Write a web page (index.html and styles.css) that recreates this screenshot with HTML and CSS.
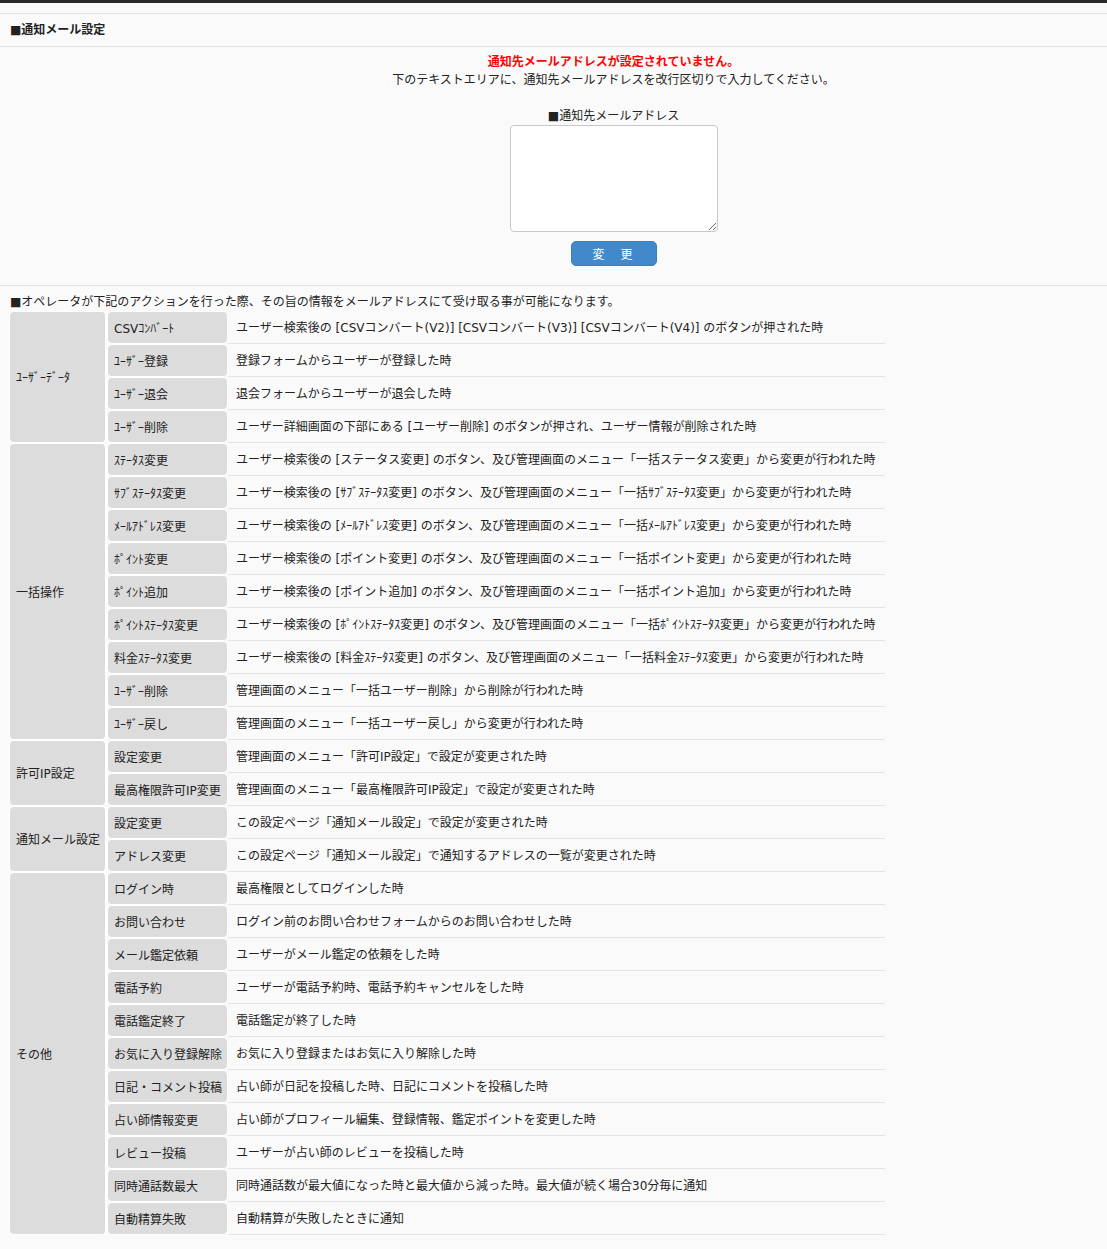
FILE: index.html
```html
<!DOCTYPE html>
<html lang="ja">
<head>
<meta charset="utf-8">
<title>通知メール設定</title>
<link rel="stylesheet" href="styles.css">
</head>
<body>
<div class="topbar"></div>
<section class="panel">
  <h2 class="panel-title">■通知メール設定</h2>
  <div class="form-area">
    <p class="warn">通知先メールアドレスが設定されていません。</p>
    <p class="note">下のテキストエリアに、通知先メールアドレスを改行区切りで入力してください。</p>
    <p class="label">■通知先メールアドレス</p>
    <textarea class="addr"></textarea>
    <div class="btn-row"><button class="btn" type="button">変　更</button></div>
  </div>
  <div class="list-area">
    <p class="intro">■オペレータが下記のアクションを行った際、その旨の情報をメールアドレスにて受け取る事が可能になります。</p>
    <table class="actions">
      <colgroup><col class="c1"><col class="c2"><col class="c3"></colgroup>
      <tbody>
        <tr><td class="cat" rowspan="4">ﾕｰｻﾞｰﾃﾞｰﾀ</td><td class="sub">CSVｺﾝﾊﾞｰﾄ</td><td class="desc">ユーザー検索後の [CSVコンバート(V2)] [CSVコンバート(V3)] [CSVコンバート(V4)] のボタンが押された時</td></tr>
        <tr><td class="sub">ﾕｰｻﾞｰ登録</td><td class="desc">登録フォームからユーザーが登録した時</td></tr>
        <tr><td class="sub">ﾕｰｻﾞｰ退会</td><td class="desc">退会フォームからユーザーが退会した時</td></tr>
        <tr><td class="sub">ﾕｰｻﾞｰ削除</td><td class="desc">ユーザー詳細画面の下部にある [ユーザー削除] のボタンが押され、ユーザー情報が削除された時</td></tr>

        <tr><td class="cat" rowspan="9">一括操作</td><td class="sub">ｽﾃｰﾀｽ変更</td><td class="desc">ユーザー検索後の [ステータス変更] のボタン、及び管理画面のメニュー「一括ステータス変更」から変更が行われた時</td></tr>
        <tr><td class="sub">ｻﾌﾞｽﾃｰﾀｽ変更</td><td class="desc">ユーザー検索後の [ｻﾌﾞｽﾃｰﾀｽ変更] のボタン、及び管理画面のメニュー「一括ｻﾌﾞｽﾃｰﾀｽ変更」から変更が行われた時</td></tr>
        <tr><td class="sub">ﾒｰﾙｱﾄﾞﾚｽ変更</td><td class="desc">ユーザー検索後の [ﾒｰﾙｱﾄﾞﾚｽ変更] のボタン、及び管理画面のメニュー「一括ﾒｰﾙｱﾄﾞﾚｽ変更」から変更が行われた時</td></tr>
        <tr><td class="sub">ﾎﾟｲﾝﾄ変更</td><td class="desc">ユーザー検索後の [ポイント変更] のボタン、及び管理画面のメニュー「一括ポイント変更」から変更が行われた時</td></tr>
        <tr><td class="sub">ﾎﾟｲﾝﾄ追加</td><td class="desc">ユーザー検索後の [ポイント追加] のボタン、及び管理画面のメニュー「一括ポイント追加」から変更が行われた時</td></tr>
        <tr><td class="sub">ﾎﾟｲﾝﾄｽﾃｰﾀｽ変更</td><td class="desc">ユーザー検索後の [ﾎﾟｲﾝﾄｽﾃｰﾀｽ変更] のボタン、及び管理画面のメニュー「一括ﾎﾟｲﾝﾄｽﾃｰﾀｽ変更」から変更が行われた時</td></tr>
        <tr><td class="sub">料金ｽﾃｰﾀｽ変更</td><td class="desc">ユーザー検索後の [料金ｽﾃｰﾀｽ変更] のボタン、及び管理画面のメニュー「一括料金ｽﾃｰﾀｽ変更」から変更が行われた時</td></tr>
        <tr><td class="sub">ﾕｰｻﾞｰ削除</td><td class="desc">管理画面のメニュー「一括ユーザー削除」から削除が行われた時</td></tr>
        <tr><td class="sub">ﾕｰｻﾞｰ戻し</td><td class="desc">管理画面のメニュー「一括ユーザー戻し」から変更が行われた時</td></tr>

        <tr><td class="cat" rowspan="2">許可IP設定</td><td class="sub">設定変更</td><td class="desc">管理画面のメニュー「許可IP設定」で設定が変更された時</td></tr>
        <tr><td class="sub">最高権限許可IP変更</td><td class="desc">管理画面のメニュー「最高権限許可IP設定」で設定が変更された時</td></tr>

        <tr><td class="cat" rowspan="2">通知メール設定</td><td class="sub">設定変更</td><td class="desc">この設定ページ「通知メール設定」で設定が変更された時</td></tr>
        <tr><td class="sub">アドレス変更</td><td class="desc">この設定ページ「通知メール設定」で通知するアドレスの一覧が変更された時</td></tr>

        <tr><td class="cat" rowspan="11">その他</td><td class="sub">ログイン時</td><td class="desc">最高権限としてログインした時</td></tr>
        <tr><td class="sub">お問い合わせ</td><td class="desc">ログイン前のお問い合わせフォームからのお問い合わせした時</td></tr>
        <tr><td class="sub">メール鑑定依頼</td><td class="desc">ユーザーがメール鑑定の依頼をした時</td></tr>
        <tr><td class="sub">電話予約</td><td class="desc">ユーザーが電話予約時、電話予約キャンセルをした時</td></tr>
        <tr><td class="sub">電話鑑定終了</td><td class="desc">電話鑑定が終了した時</td></tr>
        <tr><td class="sub">お気に入り登録解除</td><td class="desc">お気に入り登録またはお気に入り解除した時</td></tr>
        <tr><td class="sub">日記・コメント投稿</td><td class="desc">占い師が日記を投稿した時、日記にコメントを投稿した時</td></tr>
        <tr><td class="sub">占い師情報変更</td><td class="desc">占い師がプロフィール編集、登録情報、鑑定ポイントを変更した時</td></tr>
        <tr><td class="sub">レビュー投稿</td><td class="desc">ユーザーが占い師のレビューを投稿した時</td></tr>
        <tr><td class="sub">同時通話数最大</td><td class="desc">同時通話数が最大値になった時と最大値から減った時。最大値が続く場合30分毎に通知</td></tr>
        <tr><td class="sub">自動精算失敗</td><td class="desc">自動精算が失敗したときに通知</td></tr>
      </tbody>
    </table>
  </div>
</section>
</body>
</html>
```

FILE: styles.css
```css
html, body {
  margin: 0;
  padding: 0;
  background: #fafafa;
}
body {
  font-family: "DejaVu Sans", "Noto Sans CJK JP", sans-serif;
  font-size: 12px;
  line-height: 18px;
  color: #222;
}
p { margin: 0; }

.topbar {
  height: 3px;
  background: #2a2a2a;
}

.panel {
  margin-top: 10px;
  border-top: 1px solid #e2e2e2;
}

.panel-title {
  margin: 0;
  padding: 1px 10px 0;
  height: 31px;
  line-height: 30px;
  font-size: 12px;
  font-weight: bold;
  border-bottom: 1px solid #e2e2e2;
}

.form-area {
  padding: 6px 0 19px 120px;
  text-align: center;
  border-bottom: 1px solid #e2e2e2;
}
.warn {
  color: #ff0000;
  font-weight: bold;
}
.label {
  margin-top: 18px;
}
.addr {
  display: block;
  margin: 0 auto;
  width: 208px;
  height: 107px;
  box-sizing: border-box;
  border: 1px solid #c8c8c8;
  border-radius: 4px;
  background: #fff;
  resize: both;
}
.btn-row {
  margin-top: 9px;
}
.btn {
  width: 86px;
  height: 25px;
  border: 1px solid #3a7fc0;
  border-radius: 5px;
  background: #4289cc;
  color: #fff;
  font-family: "Noto Sans CJK JP", sans-serif;
  font-size: 12px;
  letter-spacing: 2px;
  padding: 0;
  line-height: 22px;
}

.list-area {
  padding: 7px 0 12px 9px;
}
.intro {
  padding-left: 1px;
  margin-bottom: 0;
}

.actions {
  width: 876px;
  table-layout: fixed;
  border-collapse: separate;
  border-spacing: 0;
}
.c1 { width: 98px; }
.c2 { width: 121px; }
.c3 { width: 657px; }

.actions tr { height: 33px; }
.actions td {
  padding: 2px 0 0;
  vertical-align: middle;
  white-space: nowrap;
}
.cat {
  background: #dcdcdc;
  border: 1px solid #fff;
  border-right-width: 2px;
  border-radius: 5px;
  padding-left: 6px !important;
}
.sub {
  background: #dcdcdc;
  border: 1px solid #fff;
  border-radius: 5px;
  padding-left: 6px !important;
}
.desc {
  padding-left: 8px !important;
  border-bottom: 1px solid #e4e4e4;
}
```
